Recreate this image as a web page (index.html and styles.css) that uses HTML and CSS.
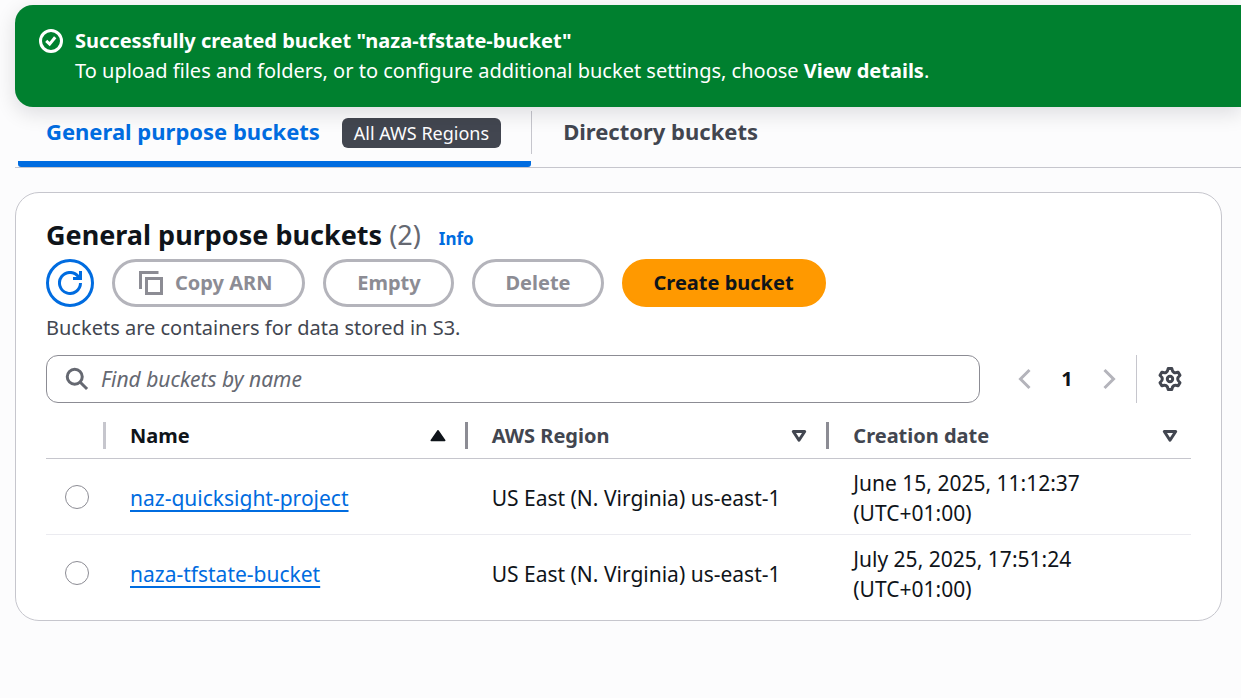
FILE: index.html
```html
<!DOCTYPE html>
<html lang="en">
<head>
<meta charset="utf-8">
<meta name="viewport" content="width=device-width, initial-scale=1">
<title>General purpose buckets</title>
<link rel="stylesheet" href="styles.css">
</head>
<body>
<div class="flash" role="status">
  <svg class="icon" viewBox="0 0 16 16" aria-hidden="true"><circle cx="8" cy="8" r="7"/><path d="m4.800 7.900 2.300 2.200 3.700-4.600"/></svg>
  <div class="flash-text">
    <strong>Successfully created bucket "naza-tfstate-bucket"</strong>
    <p>To upload files and folders, or to configure additional bucket settings, choose <strong>View details</strong>.</p>
  </div>
</div>

<div class="tabs" role="tablist">
  <button class="tab tab-active" role="tab" aria-selected="true">General purpose buckets <span class="badge">All AWS Regions</span></button>
  <span class="tab-divider"></span>
  <button class="tab" role="tab" aria-selected="false">Directory buckets</button>
</div>

<main class="card">
  <div class="heading">
    <h2>General purpose buckets <span class="count">(2)</span></h2>
    <a class="info" href="#">Info</a>
  </div>
  <div class="actions">
    <button class="btn btn-icon" aria-label="Refresh">
      <svg class="icon" viewBox="0 0 16 16" aria-hidden="true"><path d="M15 8a7 7 0 1 1-1.300-4.100L15 5M10 5h5V0"/></svg>
    </button>
    <button class="btn" disabled>
      <svg class="icon" viewBox="0 0 16 16" aria-hidden="true"><path d="M1 12V1h12M5 5h10v10H5z"/></svg>
      Copy ARN
    </button>
    <button class="btn" disabled>Empty</button>
    <button class="btn" disabled>Delete</button>
    <button class="btn btn-primary">Create bucket</button>
  </div>
  <p class="description">Buckets are containers for data stored in S3.</p>

  <div class="tools">
    <label class="search">
      <svg class="icon" viewBox="0 0 16 16" aria-hidden="true"><circle cx="6.500" cy="6.500" r="5"/><path d="m10 10 4.700 4.700"/></svg>
      <input type="text" placeholder="Find buckets by name" aria-label="Find buckets by name">
    </label>
    <nav class="pages" aria-label="Pagination">
      <button class="page-btn" disabled aria-label="Previous page"><svg class="icon" viewBox="0 0 16 16" aria-hidden="true"><path d="M11 2 5 8l6 6"/></svg></button>
      <button class="page-btn page-current">1</button>
      <button class="page-btn" disabled aria-label="Next page"><svg class="icon" viewBox="0 0 16 16" aria-hidden="true"><path d="m5 2 6 6-6 6"/></svg></button>
    </nav>
    <button class="settings" aria-label="Preferences">
      <svg class="icon gear" viewBox="0 0 16 16" aria-hidden="true"><circle cx="8" cy="8" r="1.800"/><path d="M6.800 1h2.400Q9.800 4.900 13.450 3.450l1.200 2.100Q11.600 8 14.650 10.450l-1.200 2.100Q9.800 11.100 9.200 15H6.800Q6.200 11.100 2.550 12.550l-1.200-2.100Q4.400 8 1.350 5.550l1.200-2.100Q6.200 4.900 6.800 1z"/></svg>
    </button>
  </div>

  <table class="buckets">
    <thead>
      <tr>
        <th class="select-col" aria-label="Select"></th>
        <th class="sorted"><div class="th">Name <svg class="icon" viewBox="0 0 16 16" aria-hidden="true"><path class="solid" d="M8 4.500 12.500 11h-9z"/></svg></div></th>
        <th><div class="th">AWS Region <svg class="icon" viewBox="0 0 16 16" aria-hidden="true"><path class="outline" d="M4.200 5h7.600L8 10.800z"/></svg></div></th>
        <th><div class="th">Creation date <svg class="icon" viewBox="0 0 16 16" aria-hidden="true"><path class="outline" d="M4.200 5h7.600L8 10.800z"/></svg></div></th>
      </tr>
    </thead>
    <tbody>
      <tr>
        <td class="select-col"><input type="radio" name="bucket" aria-label="naz-quicksight-project"></td>
        <td><a href="#">naz-quicksight-project</a></td>
        <td>US East (N. Virginia) us-east-1</td>
        <td>June 15, 2025, 11:12:37 (UTC+01:00)</td>
      </tr>
      <tr>
        <td class="select-col"><input type="radio" name="bucket" aria-label="naza-tfstate-bucket"></td>
        <td><a href="#">naza-tfstate-bucket</a></td>
        <td>US East (N. Virginia) us-east-1</td>
        <td>July 25, 2025, 17:51:24 (UTC+01:00)</td>
      </tr>
    </tbody>
  </table>
</main>
</body>
</html>
```

FILE: styles.css
```css
:root {
  --blue: #006ce0;
  --ink: #0f141a;
  --slate: #424650;
  --grey: #8c8c94;
  --line: #c6c6cd;
}
* { box-sizing: border-box; }
body {
  margin: 0;
  padding: 5px 0 0 15px;
  background: #fcfcfd;
  color: var(--ink);
  font: 20px/30px "Noto Sans", sans-serif;
}
p, h2 { margin: 0; }
button, input { font: inherit; color: inherit; }
button { background: none; border: 0; padding: 0; }
.icon {
  width: 24px;
  height: 24px;
  flex: none;
  fill: none;
  stroke: currentColor;
  stroke-width: 2;
}
.icon .solid { fill: currentColor; stroke-width: 1; stroke-linejoin: round; }
.icon .outline, .gear { stroke-linejoin: round; }

.flash {
  position: relative;
  display: flex;
  gap: 12px;
  padding: 21px 24px;
  border-radius: 18px 0 0 18px;
  background: #00802f;
  color: #fff;
  box-shadow: 0 6px 20px 1px rgba(0, 7, 22, .12);
}
.flash .icon { margin-top: 3px; }

.tabs {
  display: flex;
  height: 61px;
  border-bottom: 1px solid var(--line);
}
.tab {
  display: flex;
  align-items: baseline;
  gap: 22px;
  padding: 9px 31px 0;
  color: var(--slate);
  font-size: 22px;
  font-weight: 700;
}
.tab-active {
  margin-left: 3px;
  padding: 9px 30px 0 28px;
  border-bottom: 6px solid var(--blue);
  border-radius: 3px;
  color: var(--blue);
}
.tab-divider { width: 1px; height: 43px; margin-top: 4px; background: var(--line); }
.badge {
  padding: 0 12px;
  border-radius: 6px;
  background: var(--slate);
  color: #fcfcfd;
  font-size: 18px;
  font-weight: 400;
  line-height: 30px;
}

.card {
  margin: 24px 19px 24px 0;
  padding: 24px 30px 10px;
  border: 1px solid var(--line);
  border-radius: 24px;
  background: #fff;
}
.heading { display: flex; align-items: baseline; gap: 18px; line-height: 36px; }
.heading h2 { font-size: 27px; }
.count { color: #656871; font-weight: 400; }
.info { color: var(--blue); font-size: 17px; font-weight: 700; text-decoration: none; }
.actions { display: flex; gap: 18px; margin-top: 2px; }
.btn {
  display: flex;
  align-items: center;
  justify-content: center;
  gap: 12px;
  min-width: 131px;
  height: 48px;
  padding: 0 30px;
  border: 3px solid #b4b4bb;
  border-radius: 24px;
  color: var(--grey);
  font-weight: 700;
}
.btn .icon { margin-left: -6px; }
.btn-icon { min-width: 0; width: 48px; padding: 0; border-color: var(--blue); color: var(--blue); }
.btn-icon .icon { margin: 0; }
.btn-primary { padding: 0 29px; border-color: #f90; background: #f90; color: var(--ink); }
.description { margin-top: 6px; color: var(--slate); }

.tools { display: flex; align-items: center; margin-top: 12px; }
.search {
  display: flex;
  flex: 1;
  align-items: center;
  gap: 12px;
  height: 48px;
  padding: 0 18px;
  border: 1px solid var(--grey);
  border-radius: 12px;
  color: #656871;
}
.search input { flex: 1; min-width: 0; border: 0; outline: 0; padding: 0; background: none; font-size: 21px; }
.search input::placeholder { color: #656871; font-style: italic; opacity: 1; }
.pages { display: flex; gap: 6px; margin: 0 9px 0 27px; }
.page-btn { display: flex; width: 36px; height: 30px; align-items: center; justify-content: center; color: #b4b4bb; }
.page-current { color: var(--ink); font-weight: 700; }
.settings {
  display: flex;
  align-items: center;
  height: 48px;
  padding: 0 9px 0 21px;
  border-left: 1px solid var(--line);
  color: var(--slate);
}

.buckets { width: 100%; margin-top: 10px; border-spacing: 0; table-layout: fixed; }
.buckets th { height: 46px; padding: 0; border-bottom: 1px solid var(--line); color: var(--slate); text-align: left; }
.th {
  display: flex;
  align-items: center;
  justify-content: space-between;
  height: 27px;
  padding: 0 18px 0 24px;
}
.buckets th:last-child .th { padding-right: 9px; }
.buckets th:not(:last-child) { background: linear-gradient(var(--grey), var(--grey)) right center / 3px 27px no-repeat; }
.buckets th.select-col { width: 60px; background-image: linear-gradient(var(--line), var(--line)); }
.buckets .sorted { color: var(--ink); }
.buckets td { padding: 9px 60px 6px 24px; border-bottom: 1px solid #ebebf0; font-size: 21px; }
.buckets td.select-col { padding: 0 0 0 19px; }
.buckets td:nth-child(3) { padding-right: 12px; }
.buckets tr:last-child td { border-bottom: 0; }
.buckets a { color: var(--blue); text-decoration-thickness: 2px; text-underline-offset: 4px; text-decoration-skip-ink: none; }
.buckets input {
  display: block;
  appearance: none;
  width: 24px;
  height: 24px;
  margin: 0;
  border: 1px solid var(--grey);
  border-radius: 50%;
}
```
